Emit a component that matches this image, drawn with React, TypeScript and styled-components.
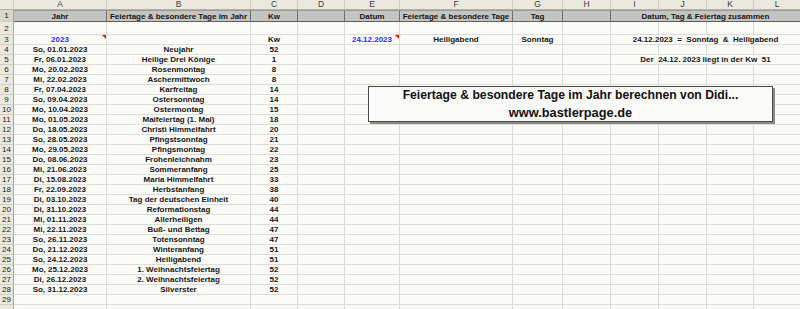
import React from 'react';
import styled, { createGlobalStyle, css } from 'styled-components';

const COLS = '14px 93px 144px 47px 47px 55px 113px 50px 48px 48px 48px 47px 47px';
const LETTERS = ['A', 'B', 'C', 'D', 'E', 'F', 'G', 'H', 'I', 'J', 'K', 'L'];
const BLUE = '#2b2bf2';

const Global = createGlobalStyle`
  *, *::before, *::after { box-sizing: border-box; }
  html, body { margin: 0; padding: 0; background: #fbfbf8; }
  body { font-family: "Liberation Sans", Arial, sans-serif; overflow: hidden; }
`;

const Sheet = styled.div`
  position: relative;
  width: 800px;
  height: 309px;
  overflow: hidden;
  display: flex;
  flex-direction: column;
  background: #fbfbf8;
`;

const Row = styled.div<{ $h: number }>`
  display: grid;
  grid-template-columns: ${COLS};
  height: ${(p) => p.$h}px;
  flex: none;
`;

const ColHead = styled.div`
  background: #ebe9df;
  border-right: 1px solid #cfccbf;
  border-bottom: 1px solid #b5b2a4;
  font-size: 8.5px;
  line-height: 9px;
  color: #3a3a3a;
  text-align: center;
`;

const RowNum = styled.div<{ $head?: boolean }>`
  background: ${(p) => (p.$head ? '#d9d7cc' : '#ebe9df')};
  border-right: 1px solid #a9a698;
  border-bottom: 1px solid #d2cfc2;
  font-size: 8px;
  color: #222;
  display: flex;
  align-items: center;
  justify-content: center;
`;

const Cell = styled.div<{ $span?: number; $color?: string; $note?: boolean }>`
  position: relative;
  grid-column: span ${(p) => p.$span ?? 1};
  border-right: 1px solid #d9d9d5;
  border-bottom: 1px solid #dcdcd8;
  display: flex;
  align-items: center;
  justify-content: center;
  font-size: 8px;
  font-weight: bold;
  color: ${(p) => p.$color ?? '#151515'};
  white-space: pre;
  overflow: hidden;
  ${(p) =>
    p.$note &&
    css`
      &::after {
        content: '';
        position: absolute;
        top: 0;
        right: 0;
        border-top: 4px solid #e4141c;
        border-left: 4px solid transparent;
      }
    `}
`;

const HeadCell = styled(Cell)`
  background: #c4c4c2;
  border-top: 1px solid #9a9a98;
  border-right: 1px solid #6e6e6c;
  border-bottom: 1px solid #5e5e5c;
  font-size: 8px;
`;

const Banner = styled.div`
  position: absolute;
  left: 368px;
  top: 86px;
  width: 405px;
  height: 36px;
  background: #fafaf8;
  border: 1px solid #4a4a4a;
  box-shadow: 2px 2px 0 #8a8a8a;
  display: flex;
  flex-direction: column;
  align-items: center;
  justify-content: center;
  font-size: 12.2px;
  font-weight: bold;
  line-height: 17px;
  color: #111;
`;

const BannerLink = styled.span`
  font-size: 12.8px;
`;

type CellSpec = { t?: string; color?: string; note?: boolean; span?: number };
type RowSpec = { n: number; label?: string; h: number; head?: boolean; cells: Record<string, CellSpec> };

const holidays: [string, string, string][] = [
  ['So, 01.01.2023', 'Neujahr', '52'],
  ['Fr, 06.01.2023', 'Heilige Drei Könige', '1'],
  ['Mo, 20.02.2023', 'Rosenmontag', '8'],
  ['Mi, 22.02.2023', 'Aschermittwoch', '8'],
  ['Fr, 07.04.2023', 'Karfreitag', '14'],
  ['So, 09.04.2023', 'Ostersonntag', '14'],
  ['Mo, 10.04.2023', 'Ostermontag', '15'],
  ['Mo, 01.05.2023', 'Maifeiertag (1. Mai)', '18'],
  ['Do, 18.05.2023', 'Christi Himmelfahrt', '20'],
  ['So, 28.05.2023', 'Pfingstsonntag', '21'],
  ['Mo, 29.05.2023', 'Pfingsmontag', '22'],
  ['Do, 08.06.2023', 'Frohenleichnahm', '23'],
  ['Mi, 21.06.2023', 'Sommeranfang', '25'],
  ['Di, 15.08.2023', 'Maria Himmelfahrt', '33'],
  ['Fr, 22.09.2023', 'Herbstanfang', '38'],
  ['Di, 03.10.2023', 'Tag der deutschen Einheit', '40'],
  ['Di, 31.10.2023', 'Reformationstag', '44'],
  ['Mi, 01.11.2023', 'Allerheiligen', '44'],
  ['Mi, 22.11.2023', 'Buß- und Bettag', '47'],
  ['So, 26.11.2023', 'Totensonntag', '47'],
  ['Do, 21.12.2023', 'Winteranfang', '51'],
  ['So, 24.12.2023', 'Heiligabend', '51'],
  ['Mo, 25.12.2023', '1. Weihnachtsfeiertag', '52'],
  ['Di, 26.12.2023', '2. Weihnachtsfeiertag', '52'],
  ['So, 31.12.2023', 'Silverster', '52'],
];

const rows: RowSpec[] = [
  {
    n: 1,
    h: 12,
    head: true,
    cells: {
      A: { t: 'Jahr' },
      B: { t: 'Feiertage & besondere Tage im Jahr' },
      C: { t: 'Kw' },
      E: { t: 'Datum' },
      F: { t: 'Feiertage & besondere Tage' },
      G: { t: 'Tag' },
      I: { t: 'Datum, Tag & Feiertag zusammen', span: 4 },
    },
  },
  { n: 2, h: 13, cells: {} },
  {
    n: 3,
    h: 10,
    cells: {
      A: { t: '2023', color: BLUE, note: true },
      C: { t: 'Kw' },
      E: { t: '24.12.2023', color: BLUE, note: true },
      F: { t: 'Heiligabend' },
      G: { t: 'Sonntag' },
      I: { t: '24.12.2023  =  Sonntag  &  Heiligabend', span: 4 },
    },
  },
  ...holidays.map(([d, name, kw], i) => {
    const cells: Record<string, CellSpec> = { A: { t: d }, B: { t: name }, C: { t: kw } };
    if (i + 4 === 5) cells.I = { t: 'Der  24.12. 2023 liegt in der Kw  51', span: 4 };
    return { n: i + 4, h: 10, cells };
  }),
  { n: 29, h: 10, cells: {} },
  { n: 30, label: '', h: 10, cells: {} },
];

function SheetRow({ spec }: { spec: RowSpec }) {
  const out: React.ReactNode[] = [];
  const C = spec.head ? HeadCell : Cell;
  let skip = 0;
  LETTERS.forEach((l) => {
    if (skip > 0) {
      skip--;
      return;
    }
    const c = spec.cells[l] ?? {};
    const span = c.span ?? 1;
    skip = span - 1;
    out.push(
      <C key={l} $span={span} $color={c.color} $note={c.note}>
        {c.t ?? ''}
      </C>
    );
  });
  return (
    <Row $h={spec.h}>
      <RowNum $head={spec.head}>{spec.label ?? spec.n}</RowNum>
      {out}
    </Row>
  );
}

export default function App() {
  return (
    <>
      <Global />
      <Sheet>
        <Row $h={10}>
          <ColHead />
          {LETTERS.map((l) => (
            <ColHead key={l}>{l}</ColHead>
          ))}
        </Row>
        {rows.map((r) => (
          <SheetRow key={r.n} spec={r} />
        ))}
        <Banner>
          <span>Feiertage &amp; besondere Tage im Jahr berechnen von Didi...</span>
          <BannerLink>www.bastlerpage.de</BannerLink>
        </Banner>
      </Sheet>
    </>
  );
}
